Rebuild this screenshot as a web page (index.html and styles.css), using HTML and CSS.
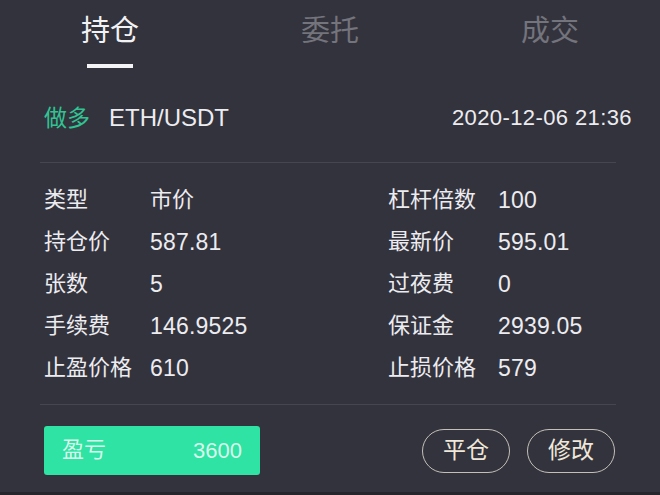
FILE: index.html
```html
<!DOCTYPE html>
<html lang="zh-CN">
<head>
  <meta charset="UTF-8" />
  <meta name="viewport" content="width=device-width, initial-scale=1.0"/>
  <title>持仓</title>
  <link rel="stylesheet" href="styles.css">
</head>
<body>
  <div class="page">
    <div class="tabs">
      <div class="tab active">持仓<div class="bar"></div></div>
      <div class="tab">委托</div>
      <div class="tab">成交</div>
    </div>

    <div class="head">
      <span class="side">做多</span>
      <span class="pair">ETH/USDT</span>
      <span class="time">2020-12-06 21:36</span>
    </div>
    <div class="line"></div>

    <div class="info">
      <span class="k">类型</span><span class="k">市价</span>
      <span class="k">杠杆倍数</span><span class="v">100</span>
      <span class="k">持仓价</span><span class="v">587.81</span>
      <span class="k">最新价</span><span class="v">595.01</span>
      <span class="k">张数</span><span class="v">5</span>
      <span class="k">过夜费</span><span class="v">0</span>
      <span class="k">手续费</span><span class="v">146.9525</span>
      <span class="k">保证金</span><span class="v">2939.05</span>
      <span class="k">止盈价格</span><span class="v">610</span>
      <span class="k">止损价格</span><span class="v">579</span>
    </div>
    <div class="line"></div>

    <div class="foot">
      <div class="pnl"><span class="cn">盈亏</span><span>3600</span></div>
      <div class="btns">
        <button>平仓</button>
        <button>修改</button>
      </div>
    </div>

    <div class="home"></div>
  </div>
</body>
</html>
```

FILE: styles.css
```css
body {
  margin: 0;
  background: #33333d;
  color: #ececf0;
  font-family: "Liberation Sans", "Noto Sans CJK SC", sans-serif;
}
.page {
  height: 495px;
  display: flex;
  flex-direction: column;
  overflow: hidden;
}
.tabs { display: flex; padding-top: 6px; }
.tab {
  flex: 1;
  display: flex;
  flex-direction: column;
  align-items: center;
  font-family: "Noto Sans CJK SC", sans-serif;
  font-size: 29px;
  line-height: 44px;
  color: #74747c;
}
.tab.active { color: #f2f2f4; }
.tab .bar { width: 46px; height: 4px; background: #f4f4f6; margin-top: 14px; }

.head {
  display: flex;
  align-items: center;
  height: 50px;
  margin-top: 25px;
  padding: 0 28px 0 44px;
  font-size: 24px;
}
.side {
  color: #30c393;
  margin-right: 19px;
  padding-bottom: 4px;
  font-family: "Noto Sans CJK SC", sans-serif;
  font-size: 23px;
}
.time { margin-left: auto; font-size: 22px; letter-spacing: 0.4px; }

.line { height: 1px; background: #464652; margin: 0 44px 0 40px; }
.head + .line { margin-top: 19px; }

.info {
  display: grid;
  grid-template-columns: 106px 238px 110px auto;
  grid-auto-rows: 42px;
  align-items: center;
  padding: 16px 0 15px 44px;
  font-size: 22px;
}
.info .k { font-family: "Noto Sans CJK SC", sans-serif; padding-bottom: 6px; }
.info .v { font-size: 23px; letter-spacing: 0.2px; }

.foot {
  display: flex;
  align-items: center;
  justify-content: space-between;
  margin-top: 21px;
  padding: 0 45px 0 44px;
}
.pnl {
  width: 216px;
  height: 49px;
  box-sizing: border-box;
  display: flex;
  align-items: center;
  justify-content: space-between;
  padding: 0 18px;
  background: #2ee3a3;
  color: #daf8ec;
  border-radius: 3px;
  font-size: 22px;
}
.pnl .cn { font-family: "Noto Sans CJK SC", sans-serif; padding-bottom: 8px; }
.btns { display: flex; gap: 17px; }
.btns button {
  width: 88px;
  height: 44px;
  border: 1px solid #c4c0b8;
  border-radius: 22px;
  background: transparent;
  color: #efe8da;
  font-family: "Noto Sans CJK SC", sans-serif;
  font-size: 23px;
  line-height: 1;
  padding: 0 0 4px;
}
.home { margin-top: auto; height: 3px; background: #25252b; }
```
